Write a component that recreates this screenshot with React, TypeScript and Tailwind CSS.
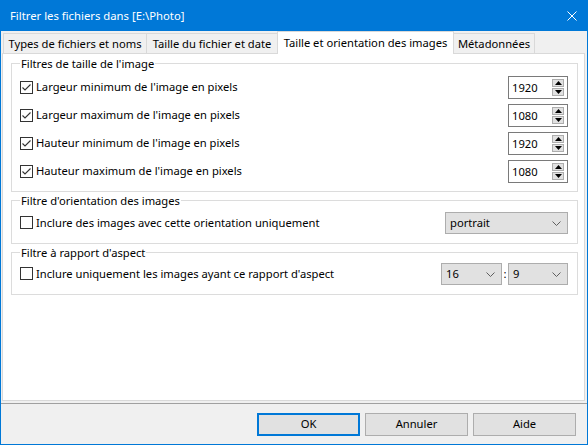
import React from 'react';

const Checkbox: React.FC<{ checked?: boolean }> = ({ checked }) => (
  <div className="flex h-[13px] w-[13px] shrink-0 items-center justify-center border border-[#333333] bg-white">
    {checked && (
      <svg width="11" height="11" viewBox="0 0 11 11">
        <polyline points="1.5,5.5 4,8 9.5,2.5" fill="none" stroke="#333333" strokeWidth="1.1" />
      </svg>
    )}
  </div>
);

const Spinner: React.FC<{ value: string }> = ({ value }) => (
  <div className="flex h-[23px] w-[60px] items-center border border-[#7a7a7a] bg-white pl-[3px] pr-[3px]">
    <span className="flex-1 leading-none">{value}</span>
    <div className="flex flex-col gap-[1px]">
      <div className="flex h-[8px] w-[12px] items-center justify-center border border-[#adadad] bg-[#e1e1e1]">
        <svg width="7" height="4" viewBox="0 0 7 4">
          <polygon points="3.5,0 7,4 0,4" fill="#000" />
        </svg>
      </div>
      <div className="flex h-[8px] w-[12px] items-center justify-center border border-[#adadad] bg-[#e1e1e1]">
        <svg width="7" height="4" viewBox="0 0 7 4">
          <polygon points="0,0 7,0 3.5,4" fill="#000" />
        </svg>
      </div>
    </div>
  </div>
);

const Combo: React.FC<{ value: string; width: string }> = ({ value, width }) => (
  <div className={`flex h-[22px] items-center justify-between border border-[#adadad] bg-[#e1e1e1] pl-[4px] pr-[6px] ${width}`}>
    <span>{value}</span>
    <svg width="9" height="5" viewBox="0 0 9 5">
      <polyline points="0.5,0.5 4.5,4.5 8.5,0.5" fill="none" stroke="#5f5f5f" strokeWidth="1" />
    </svg>
  </div>
);

const sizeRows = [
  { label: "Largeur minimum de l'image en pixels", value: '1920' },
  { label: "Largeur maximum de l'image en pixels", value: '1080' },
  { label: "Hauteur minimum de l'image en pixels", value: '1920' },
  { label: "Hauteur maximum de l'image en pixels", value: '1080' },
];

const App: React.FC = () => {
  return (
    <div className="flex h-[445px] w-[588px] flex-col border border-[#0078d7] bg-[#f0f0f0] font-['Noto_Sans',sans-serif] text-[11.2px] text-black">
      {/* Title bar */}
      <div className="flex h-[30px] shrink-0 items-center justify-between bg-[#0078d7] pl-[9px] pr-[10px] text-[11.3px] text-white">
        <span>Filtrer les fichiers dans [E:\Photo]</span>
        <svg width="10" height="10" viewBox="0 0 10 10">
          <path d="M0.5 0.5L9.5 9.5M9.5 0.5L0.5 9.5" stroke="#fff" strokeWidth="1" />
        </svg>
      </div>

      {/* Tabs */}
      <div className="flex h-[22px] shrink-0 items-end pl-[2px]">
        <div className="flex h-[20px] w-[144px] items-center justify-center border border-b-0 border-[#d9d9d9] pt-[1px]">
          Types de fichiers et noms
        </div>
        <div className="-ml-px flex h-[20px] w-[132px] items-center justify-center border border-b-0 border-[#d9d9d9] pt-[1px]">
          Taille du fichier et date
        </div>
        <div className="relative z-10 -mb-px -ml-px flex h-[23px] w-[177px] items-center justify-center border border-b-0 border-[#d9d9d9] bg-white">
          Taille et orientation des images
        </div>
        <div className="-ml-px flex h-[20px] w-[82px] items-center justify-center border border-b-0 border-[#d9d9d9] pt-[1px]">
          Métadonnées
        </div>
      </div>

      {/* Panel */}
      <div className="ml-[1px] mr-[2px] flex flex-1 flex-col border border-[#d9d9d9] bg-white">
        <fieldset className="ml-[8px] mr-[6px] mt-[2px] border border-[#dcdcdc] pb-[8px] pl-[8px] pr-[9px] pt-[5px]">
          <legend className="px-[1px] leading-[15px]">Filtres de taille de l'image</legend>
          <div className="flex flex-col gap-[5px]">
            {sizeRows.map((row) => (
              <div key={row.label} className="flex h-[23px] items-center justify-between">
                <div className="flex items-center gap-[3px]">
                  <Checkbox checked />
                  <span>{row.label}</span>
                </div>
                <Spinner value={row.value} />
              </div>
            ))}
          </div>
        </fieldset>

        <fieldset className="ml-[8px] mr-[6px] mt-[1px] border border-[#dcdcdc] pb-[9px] pl-[8px] pr-[9px] pt-[4px]">
          <legend className="px-[1px] leading-[15px]">Filtre d'orientation des images</legend>
          <div className="flex h-[22px] items-center justify-between">
            <div className="flex items-center gap-[3px]">
              <Checkbox />
              <span>Inclure des images avec cette orientation uniquement</span>
            </div>
            <Combo value="portrait" width="w-[123px]" />
          </div>
        </fieldset>

        <fieldset className="ml-[8px] mr-[6px] mt-[1px] border border-[#dcdcdc] pb-[9px] pl-[8px] pr-[9px] pt-[3px]">
          <legend className="px-[1px] leading-[15px]">Filtre à rapport d'aspect</legend>
          <div className="flex h-[22px] items-center justify-between">
            <div className="flex items-center gap-[3px]">
              <Checkbox />
              <span>Inclure uniquement les images ayant ce rapport d'aspect</span>
            </div>
            <div className="flex items-center">
              <Combo value="16" width="w-[61px]" />
              <span className="w-[6px] text-center">:</span>
              <Combo value="9" width="w-[60px]" />
            </div>
          </div>
        </fieldset>
      </div>

      {/* Footer */}
      <div className="mt-[2px] flex h-[41px] shrink-0 justify-end gap-[5px] border-t border-[#a0a0a0] pr-[11px] pt-[9px]">
        <button className="flex h-[23px] w-[103px] items-center justify-center border-2 border-[#0078d7] bg-[#e1e1e1]">
          OK
        </button>
        <button className="flex h-[23px] w-[103px] items-center justify-center border border-[#adadad] bg-[#e1e1e1]">
          Annuler
        </button>
        <button className="flex h-[23px] w-[103px] items-center justify-center border border-[#adadad] bg-[#e1e1e1]">
          Aide
        </button>
      </div>
    </div>
  );
};

export default App;
